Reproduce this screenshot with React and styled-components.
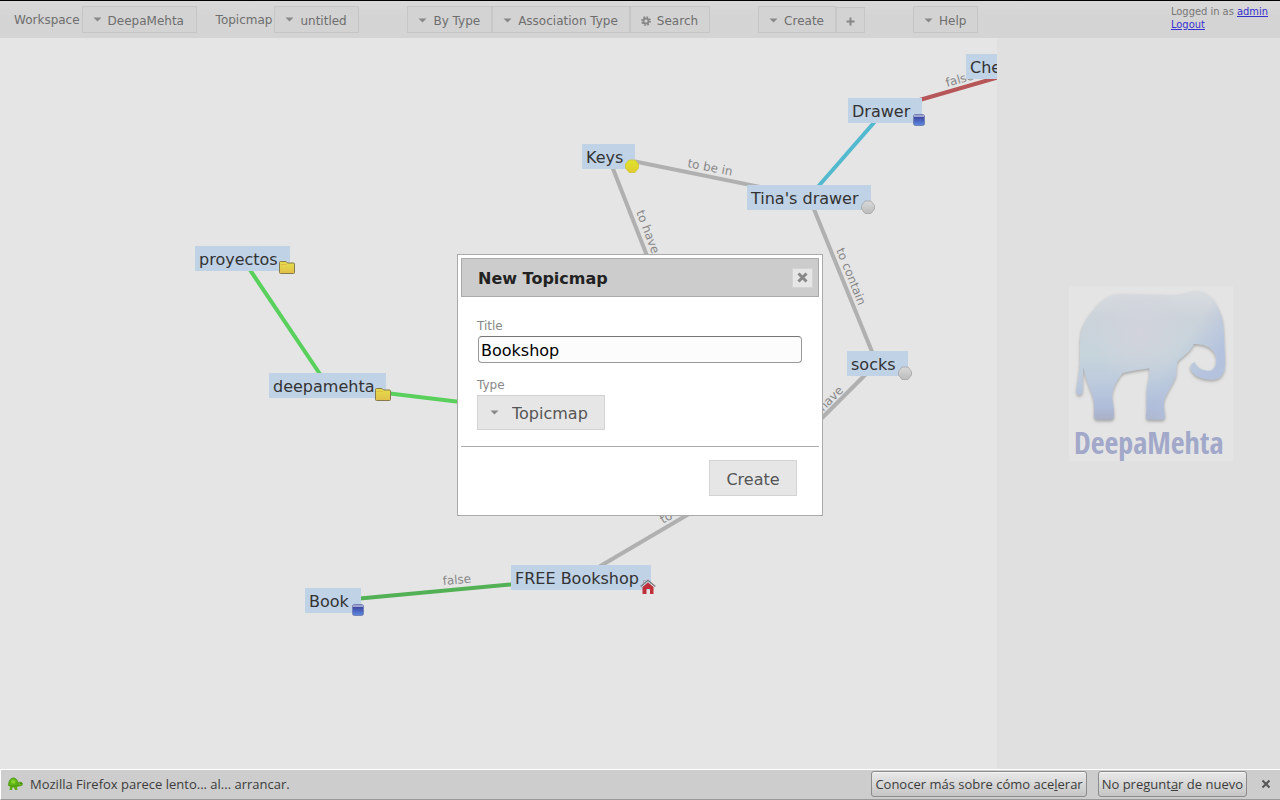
import React from "react";
import styled, { createGlobalStyle, css } from "styled-components";

const GlobalStyle = createGlobalStyle`
  *, *::before, *::after { box-sizing: border-box; }
  body { margin: 0; font-family: "DejaVu Sans", Verdana, sans-serif; color: #333; }
`;

const Window = styled.div`
  display: flex;
  flex-direction: column;
  min-height: 100vh;
  background: #e5e5e5;
`;

const Workbench = styled.div`
  position: relative;
  flex: 1;
  display: flex;
  flex-direction: column;
  border-top: 1px solid #000;
`;

const Toolbar = styled.header`
  display: flex;
  align-items: flex-start;
  justify-content: space-between;
  height: 37px;
  padding: 4px 12px 0 14px;
  background: linear-gradient(#d9d9d9, #d4d4d4 40%);
  font-size: 12px;
`;

const ToolGroups = styled.div`
  display: flex;
  align-items: flex-start;
  gap: 48px;
  padding-top: 1px;
`;

const Selectors = styled.div`
  display: flex;
  gap: 19px;
`;

const Field = styled.div`
  display: flex;
  align-items: flex-start;
  gap: 2px;
`;

const ToolLabel = styled.label`
  line-height: 28px;
  color: #6e6e6e;
`;

const ButtonSet = styled.div`
  display: flex;
  align-items: flex-end;
`;

const control = css`
  margin: 0;
  border: 1px solid #c6c6c6;
  border-radius: 0;
  background: #d3d3d3;
  color: #6e6e6e;
  font-family: inherit;
  font-size: 12px;
`;

const ToolButton = styled.button`
  ${control}
  display: flex;
  align-items: center;
  gap: 6px;
  height: 27px;
  padding: 2px 11px 0 10px;
  white-space: nowrap;
`;

const PlusButton = styled(ToolButton)`
  height: 26px;
  padding: 2px 9px 0;
`;

const SelectWrap = styled.div`
  position: relative;
  display: flex;
`;

const SelectCaret = styled.span`
  position: absolute;
  left: ${(p) => (p.$large ? 13 : 11)}px;
  top: 0;
  bottom: 0;
  display: flex;
  align-items: center;
  pointer-events: none;
`;

const ToolSelect = styled.select`
  ${control}
  appearance: none;
  height: 27px;
  padding: 2px 11px 0 25px;
`;

const Session = styled.div`
  font-family: "DejaVu Sans Condensed", "DejaVu Sans", sans-serif;
  font-size: 11px;
  line-height: 13px;
  color: #777;
`;

const SessionLink = styled.a`
  color: #3530d0;
`;

const Main = styled.main`
  flex: 1;
  display: flex;
`;

const Canvas = styled.section`
  position: relative;
  flex: 1;
  overflow: hidden;
`;

const Edges = styled.svg`
  position: absolute;
  inset: 0;
  width: 100%;
  height: 100%;
  font-size: 12px;
`;

const Topic = styled.div`
  position: absolute;
  left: ${(p) => p.$x}px;
  top: ${(p) => p.$y}px;
  height: 25px;
  padding: 1px 12px 0 4px;
  background: #c0d2e6;
  font-size: 16px;
  line-height: 26px;
  white-space: nowrap;
`;

const TopicIcon = styled.svg`
  position: absolute;
  right: -5px;
  bottom: -5px;
  width: 16px;
  height: 16px;
`;

const DetailPanel = styled.aside`
  display: flex;
  align-items: center;
  justify-content: center;
  width: 283px;
  padding: 0 0 60px 25px;
  background: #e0e0e0;
`;

const Overlay = styled.div`
  position: absolute;
  inset: 0;
  display: flex;
  align-items: center;
  justify-content: center;
`;

const Dialog = styled.section`
  width: 366px;
  padding: 3px;
  border: 1px solid #aaa;
  background: #fff;
`;

const TitleBar = styled.div`
  display: flex;
  align-items: center;
  justify-content: space-between;
  height: 39px;
  padding: 0 5px 0 16px;
  border: 1px solid #aaa;
  background: #ccc;
`;

const DialogTitle = styled.h2`
  margin: 0;
  padding-top: 2px;
  font-size: 16px;
  line-height: 20px;
  color: #222;
`;

const CloseButton = styled.button`
  display: flex;
  align-items: center;
  justify-content: center;
  width: 21px;
  height: 20px;
  padding: 0;
  border: 1px solid #d3d3d3;
  background: #e6e6e6;
`;

const Form = styled.form`
  margin: 0;
`;

const Fields = styled.div`
  padding: 20px 16px 16px;
`;

const FieldLabel = styled.label`
  display: block;
  height: 19px;
  font-size: 12px;
  line-height: 18px;
  color: #888;
`;

const InputRow = styled.div`
  padding: 0 1px 13px;
`;

const TitleInput = styled.input`
  display: block;
  width: 100%;
  height: 27px;
  margin: 0;
  padding: 2px 2px 0;
  border: 1px solid #999;
  border-top-color: #777;
  border-radius: 4px;
  background: #fcfcfc;
  color: #000;
  font-family: inherit;
  font-size: 16px;
`;

const dialogControl = css`
  height: 36px;
  margin: 0;
  border: 1px solid #d3d3d3;
  border-radius: 0;
  background: #e6e6e6;
  color: #555;
  font-family: inherit;
  font-size: 16px;
`;

const TypeSelect = styled.select`
  ${dialogControl}
  appearance: none;
  height: 35px;
  padding: 2px 16px 0 34px;
`;

const Actions = styled.div`
  display: flex;
  justify-content: flex-end;
  padding: 13px 22px 16px;
  border-top: 1px solid #aaa;
`;

const SubmitButton = styled.button`
  ${dialogControl}
  min-width: 88px;
  padding: 3px 16px 0;
`;

const NoticeBar = styled.footer`
  display: flex;
  align-items: center;
  height: 31px;
  padding: 0 6px 1px;
  border: solid #fff;
  border-width: 1px 0 0 1px;
  border-bottom: 1px solid #999;
  background: #cdcdcd;
  font-family: "Open Sans", "Noto Sans", sans-serif;
  font-size: 13px;
  color: #3c3c3c;
`;

const NoticeText = styled.p`
  flex: 1;
  margin: 0 0 0 7px;
`;

const NoticeButton = styled.button`
  height: 26px;
  margin-right: 11px;
  padding: 0 3px;
  border: 1px solid #8c8c8c;
  border-radius: 3px;
  background: linear-gradient(#e9e9e9, #c5c5c5);
  box-shadow: inset 0 1px 0 #f4f4f4;
  color: inherit;
  font: inherit;
  white-space: nowrap;
`;

const NoticeClose = styled.button`
  display: flex;
  padding: 2px;
  border: 0;
  background: none;
`;

const Caret = () => (
  <svg width="9" height="6" viewBox="0 0 9 6" aria-hidden="true">
    <path d="M0.5 0.5H8.5L4.5 4.5Z" fill="#888" />
  </svg>
);

const Gear = () => (
  <svg width="10" height="10" viewBox="0 0 10 10" aria-hidden="true">
    <circle cx="5" cy="5" r="2.6" fill="none" stroke="#888" strokeWidth="2" />
    <circle cx="5" cy="5" r="4.1" fill="none" stroke="#888" strokeWidth="1.6" strokeDasharray="1.7 1.52" />
  </svg>
);

const Plus = () => (
  <svg width="9" height="9" viewBox="0 0 9 9" aria-hidden="true">
    <path d="M4.5 0.5V8.5M0.5 4.5H8.5" stroke="#888" strokeWidth="2" />
  </svg>
);

const Turtle = () => (
  <svg width="16" height="14" viewBox="0 0 16 14" aria-hidden="true">
    <path d="M0.5 8.5L3 7L13 7.5L12 9.5L10 10L10.5 13H8L7 10.5H5.5L5 13H2.5L3 9.5Z" fill="#5fae16" />
    <path d="M1.5 7.5C2 3 4 1 6.5 1S11 3.5 11.5 7.5Q11 9 6.5 9.2T1.5 7.5Z" fill="#5fb514" stroke="#458b12" strokeWidth="0.7" />
    <path d="M4 4L6 2.5L8.5 4L8 6.5H4.5Z" fill="#86d32e" />
    <ellipse cx="13.2" cy="7" rx="2.3" ry="1.9" fill="#69b823" stroke="#458b12" strokeWidth="0.6" />
    <circle cx="14" cy="6.5" r="0.6" fill="#234d08" />
  </svg>
);

const glyphs = {
  folder: (
    <>
      <path d="M0.5 12.5V2.5Q0.5 1.5 1.5 1.5H7L8.5 3H14.5Q15.5 3 15.5 4V12.5Q15.5 13.5 14.5 13.5H1.5Q0.5 13.5 0.5 12.5Z" fill="url(#folderFill)" stroke="#857a4c" />
      <path d="M1.5 4.5H7L8.5 3.5" fill="none" stroke="#e0bd43" />
    </>
  ),
  box: (
    <>
      <rect x="2.5" y="2.5" width="11" height="11" rx="2" fill="url(#boxFill)" stroke="#7381b5" />
      <path d="M3 4H13" stroke="#b7bcdb" strokeWidth="1.6" />
    </>
  ),
  gray: <path d="M5 2H11L14.5 6.5V10L11 14.5H5L1.5 10V6.5Z" fill="url(#grayFill)" stroke="#a5a5a5" strokeWidth="0.8" strokeLinejoin="round" />,
  yellow: <path d="M5 2H11L14.5 6V10L11 14.5H5L1.5 10V6Z" fill="url(#yellowFill)" stroke="#cfc43c" strokeWidth="0.8" strokeLinejoin="round" />,
  home: (
    <>
      <path d="M2.5 8L8 3.5L13.5 8V15H10V10H6.5V15H2.5Z" fill="#c03038" />
      <path d="M0.7 7.5L8 1.2L15.3 7.5" fill="none" stroke="#777" strokeWidth="1.2" />
      <path d="M3.5 4V1.5H5.5" fill="none" stroke="#aaa" />
    </>
  ),
};

const topics = [
  { name: "proyectos", x: 195, y: 208, icon: "folder" },
  { name: "deepamehta", x: 269, y: 335, icon: "folder" },
  { name: "Keys", x: 582, y: 106, icon: "yellow" },
  { name: "Tina's drawer", x: 747, y: 147, icon: "gray" },
  { name: "Drawer", x: 848, y: 60, icon: "box" },
  { name: "Chest", x: 966, y: 16, icon: "box" },
  { name: "socks", x: 847, y: 313, icon: "gray" },
  { name: "FREE Bookshop", x: 511, y: 527, icon: "home" },
  { name: "Book", x: 305, y: 550, icon: "box" },
];

const edges = [
  { from: [242, 220], to: [328, 348], color: "#59d05c" },
  { from: [328, 348], to: [560, 376], color: "#59d05c" },
  { from: [608, 118], to: [809, 159], color: "#b0b0b0" },
  { from: [608, 118], to: [660, 251], color: "#b0b0b0" },
  { from: [885, 72], to: [809, 159], color: "#52b9cf" },
  { from: [885, 72], to: [1020, 33], color: "#b75658" },
  { from: [809, 159], to: [877, 326], color: "#b0b0b0" },
  { from: [876, 326], to: [780, 422], color: "#b0b0b0" },
  { from: [580, 540], to: [733, 450], color: "#b0b0b0" },
  { from: [333, 563], to: [581, 540], color: "#52b055" },
];

const edgeLabels = [
  { text: "to be in", x: 687, y: 129, angle: 11 },
  { text: "to have", x: 636, y: 174, angle: 69 },
  { text: "to contain", x: 836, y: 212, angle: 68 },
  { text: "to have", x: 812, y: 385, angle: -45 },
  { text: "to have", x: 663, y: 486, angle: -30 },
  { text: "false", x: 443, y: 547, angle: -5 },
  { text: "false", x: 947, y: 49, angle: -16 },
];

const IconDefs = () => (
  <defs>
    <linearGradient id="folderFill" x2="0" y2="1">
      <stop offset="0.2" stopColor="#e4d94b" />
      <stop offset="1" stopColor="#e2bf49" />
    </linearGradient>
    <linearGradient id="boxFill" x2="0" y2="1">
      <stop offset="0.2" stopColor="#3f45a0" />
      <stop offset="1" stopColor="#5a8ae0" />
    </linearGradient>
    <linearGradient id="grayFill" x2="0" y2="1">
      <stop offset="0" stopColor="#d9d9d9" />
      <stop offset="1" stopColor="#bcbcbc" />
    </linearGradient>
    <linearGradient id="yellowFill" x2="0" y2="1">
      <stop offset="0" stopColor="#dfe42f" />
      <stop offset="1" stopColor="#e0cc2c" />
    </linearGradient>
  </defs>
);

const Logo = () => (
  <svg width="164" height="175" viewBox="57 18 492 525" role="img" aria-label="DeepaMehta">
    <defs>
      <linearGradient id="skin" x2="0" y2="1">
        <stop offset="0" stopColor="#d8dce0" />
        <stop offset="0.2" stopColor="#ccd3da" />
        <stop offset="0.5" stopColor="#c6d4dc" />
        <stop offset="0.72" stopColor="#bccadd" />
        <stop offset="0.9" stopColor="#afbcda" />
        <stop offset="1" stopColor="#aab0c6" />
      </linearGradient>
      <radialGradient id="belly" gradientUnits="userSpaceOnUse" cx="270" cy="160" r="150">
        <stop offset="0" stopColor="#d2d3dc" />
        <stop offset="1" stopColor="#d2d3dc" stopOpacity="0" />
      </radialGradient>
      <linearGradient id="trunk" gradientUnits="userSpaceOnUse" x1="440" y1="130" x2="530" y2="190">
        <stop offset="0" stopColor="#b4c2de" stopOpacity="0" />
        <stop offset="1" stopColor="#b4c2de" />
      </linearGradient>
      <filter id="shadow" x="-10%" y="-10%" width="120%" height="125%">
        <feDropShadow dx="0" dy="5" stdDeviation="5" floodColor="#777" floodOpacity="0.6" />
      </filter>
      <path
        id="elephant"
        d="M180 48C200 40 230 42 260 43L380 45C400 44 415 36 440 34C475 33 500 65 515 110C523 140 522 180 525 230C527 270 522 290 495 298C465 302 425 290 420 262Q422 252 433 246C440 262 455 273 478 273C497 270 502 248 498 228C490 205 465 190 431 192C422 215 400 228 382 245C378 255 381 270 378 288C365 320 345 345 342 365C340 385 345 395 345 410Q345 419 336 419L296 419Q288 419 288 410C292 380 288 340 292 315C298 295 300 280 298 264C270 270 240 272 218 279C200 300 188 325 186 350C190 375 193 395 192 410Q191 419 182 419L142 419Q132 419 132 408C133 385 134 365 127 345C118 320 106 295 101 262C98 280 99 310 98 335Q94 346 88 345Q78 343 79 330C82 310 90 270 90 240C90 200 88 170 98 140C115 105 150 60 180 48Z"
      />
    </defs>
    <rect x="57" y="18" width="492" height="525" fill="#e4e4e4" />
    <use href="#elephant" fill="url(#skin)" filter="url(#shadow)" />
    <use href="#elephant" fill="url(#belly)" />
    <use href="#elephant" fill="url(#trunk)" />
    <text
      x="72"
      y="521"
      fontFamily="'Open Sans Condensed', 'Noto Sans Condensed', 'Roboto Condensed', Lato, sans-serif"
      fontWeight="700"
      fontSize="90"
      fill="#a1a8c9"
    >
      DeepaMehta
    </text>
  </svg>
);

const ToolbarSelect = ({ id, label, value }) => (
  <Field>
    <ToolLabel htmlFor={id}>{label}</ToolLabel>
    <SelectWrap>
      <ToolSelect id={id} defaultValue={value}>
        <option>{value}</option>
      </ToolSelect>
      <SelectCaret><Caret /></SelectCaret>
    </SelectWrap>
  </Field>
);

export default function App() {
  return (
    <Window>
      <GlobalStyle />
      <Workbench>
        <Toolbar>
          <ToolGroups>
            <Selectors>
              <ToolbarSelect id="workspace" label="Workspace" value="DeepaMehta" />
              <ToolbarSelect id="topicmap" label="Topicmap" value="untitled" />
            </Selectors>
            <ButtonSet>
              <ToolButton type="button"><Caret />By Type</ToolButton>
              <ToolButton type="button"><Caret />Association Type</ToolButton>
              <ToolButton type="button"><Gear />Search</ToolButton>
            </ButtonSet>
            <ButtonSet>
              <ToolButton type="button"><Caret />Create</ToolButton>
              <PlusButton type="button" aria-label="Add"><Plus /></PlusButton>
            </ButtonSet>
            <ButtonSet>
              <ToolButton type="button"><Caret />Help</ToolButton>
            </ButtonSet>
          </ToolGroups>
          <Session>
            Logged in as <SessionLink href="#admin">admin</SessionLink>
            <br />
            <SessionLink href="#logout">Logout</SessionLink>
          </Session>
        </Toolbar>

        <Main>
          <Canvas>
            <Edges aria-hidden="true">
              <IconDefs />
              {edges.map((e, i) => (
                <line key={i} x1={e.from[0]} y1={e.from[1]} x2={e.to[0]} y2={e.to[1]} stroke={e.color} strokeWidth="4" />
              ))}
              {edgeLabels.map((l, i) => (
                <text key={i} transform={`translate(${l.x} ${l.y}) rotate(${l.angle})`} fill="#888">
                  {l.text}
                </text>
              ))}
            </Edges>
            {topics.map((t) => (
              <Topic key={t.name} $x={t.x} $y={t.y}>
                {t.name}
                <TopicIcon viewBox="0 0 16 16" aria-hidden="true">{glyphs[t.icon]}</TopicIcon>
              </Topic>
            ))}
          </Canvas>
          <DetailPanel><Logo /></DetailPanel>
        </Main>

        <Overlay>
          <Dialog role="dialog" aria-labelledby="dialog-title">
            <TitleBar>
              <DialogTitle id="dialog-title">New Topicmap</DialogTitle>
              <CloseButton type="button" aria-label="Close">
                <svg width="11" height="11" viewBox="0 0 11 11" aria-hidden="true">
                  <path d="M1.5 1.5L9.5 9.5M9.5 1.5L1.5 9.5" stroke="#888" strokeWidth="3" />
                </svg>
              </CloseButton>
            </TitleBar>
            <Form onSubmit={(e) => e.preventDefault()}>
              <Fields>
                <FieldLabel htmlFor="title">Title</FieldLabel>
                <InputRow>
                  <TitleInput id="title" type="text" defaultValue="Bookshop" />
                </InputRow>
                <FieldLabel htmlFor="type">Type</FieldLabel>
                <SelectWrap>
                  <TypeSelect id="type" defaultValue="Topicmap">
                    <option>Topicmap</option>
                  </TypeSelect>
                  <SelectCaret $large><Caret /></SelectCaret>
                </SelectWrap>
              </Fields>
              <Actions>
                <SubmitButton type="submit">Create</SubmitButton>
              </Actions>
            </Form>
          </Dialog>
        </Overlay>
      </Workbench>

      <NoticeBar>
        <Turtle />
        <NoticeText>Mozilla Firefox parece lento... al... arrancar.</NoticeText>
        <NoticeButton type="button">Conocer más sobre cómo ace<u>l</u>erar</NoticeButton>
        <NoticeButton type="button">No pregunt<u>a</u>r de nuevo</NoticeButton>
        <NoticeClose type="button" aria-label="Cerrar">
          <svg width="12" height="12" viewBox="0 0 12 12" aria-hidden="true">
            <path d="M2.5 2.5L9.5 9.5M9.5 2.5L2.5 9.5" stroke="#555" strokeWidth="2" />
          </svg>
        </NoticeClose>
      </NoticeBar>
    </Window>
  );
}
